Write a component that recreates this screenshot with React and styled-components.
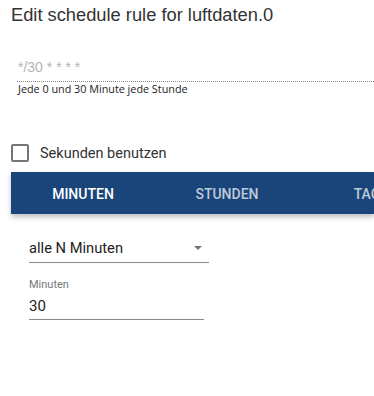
import React from "react";
import styled, { createGlobalStyle } from "styled-components";

const GlobalStyle = createGlobalStyle`
  html, body {
    margin: 0;
    padding: 0;
    background: #fff;
    font-family: Roboto, "Liberation Sans", sans-serif;
    overflow: hidden;
  }
`;

const Page = styled.div`
  width: 374px;
  height: 396px;
  overflow: hidden;
  display: flex;
  flex-direction: column;
`;

const Title = styled.h2`
  margin: 0;
  padding: 4px 0 0 11px;
  font-family: "Liberation Sans", Arial, sans-serif;
  font-size: 18.3px;
  font-weight: 400;
  color: #333;
  line-height: 22px;
  white-space: nowrap;
`;

const CronBlock = styled.div`
  margin: 31px 0 0 17px;
  display: flex;
  flex-direction: column;
`;

const CronInput = styled.div`
  font-family: "Liberation Sans", Arial, sans-serif;
  font-size: 14px;
  color: #b4b4b4;
  line-height: 20px;
  padding: 0 0 4px 1px;
  border-bottom: 1px dotted #888;
  white-space: pre;
`;

const Helper = styled.div`
  font-family: "Open Sans", sans-serif;
  font-size: 10.8px;
  color: #222;
  line-height: 14px;
  padding: 0 0 0 1px;
`;

const CheckRow = styled.label`
  margin: 48px 0 0 11px;
  display: flex;
  align-items: center;
  gap: 11px;
  font-size: 14.5px;
  color: #333;
`;

const Box = styled.span`
  width: 14px;
  height: 14px;
  border: 2px solid #757575;
  border-radius: 2px;
  box-sizing: content-box;
`;

const TabBar = styled.div`
  margin: 10px 0 0 11px;
  height: 42px;
  background: #19457a;
  display: flex;
  box-shadow: 0 3px 5px rgba(0, 0, 0, 0.25);
  white-space: nowrap;
  overflow: hidden;
`;

const Tab = styled.div`
  flex: 0 0 144px;
  display: flex;
  align-items: center;
  justify-content: center;
  font-size: 14px;
  font-weight: 500;
  text-transform: uppercase;
  padding-top: 1px;
  color: ${(p) => (p.$active ? "#fff" : "rgba(255,255,255,0.72)")};
`;

const Form = styled.div`
  padding: 24px 0 0 29px;
  display: flex;
  flex-direction: column;
`;

const Select = styled.div`
  width: 180px;
  display: flex;
  align-items: center;
  justify-content: space-between;
  font-size: 14.7px;
  color: #222;
  line-height: 20px;
  padding-bottom: 4px;
  border-bottom: 1px solid #8a8a8a;
`;

const Arrow = styled.span`
  width: 0;
  height: 0;
  margin-right: 7px;
  border-left: 4px solid transparent;
  border-right: 4px solid transparent;
  border-top: 4px solid #777;
`;

const Field = styled.div`
  margin-top: 15px;
  width: 175px;
  display: flex;
  flex-direction: column;
`;

const FieldLabel = styled.div`
  font-size: 11px;
  color: #777;
  line-height: 14px;
`;

const FieldValue = styled.div`
  font-size: 15px;
  color: #222;
  line-height: 20px;
  padding: 4px 0 3px;
  border-bottom: 1px solid #8a8a8a;
`;

export default function App() {
  return (
    <Page>
      <GlobalStyle />
      <Title>Edit schedule rule for luftdaten.0</Title>
      <CronBlock>
        <CronInput>*/30 * * * *</CronInput>
        <Helper>Jede 0 und 30 Minute jede Stunde</Helper>
      </CronBlock>
      <CheckRow>
        <Box />
        Sekunden benutzen
      </CheckRow>
      <TabBar>
        <Tab $active>Minuten</Tab>
        <Tab>Stunden</Tab>
        <Tab>Tage</Tab>
      </TabBar>
      <Form>
        <Select>
          alle N Minuten
          <Arrow />
        </Select>
        <Field>
          <FieldLabel>Minuten</FieldLabel>
          <FieldValue>30</FieldValue>
        </Field>
      </Form>
    </Page>
  );
}
